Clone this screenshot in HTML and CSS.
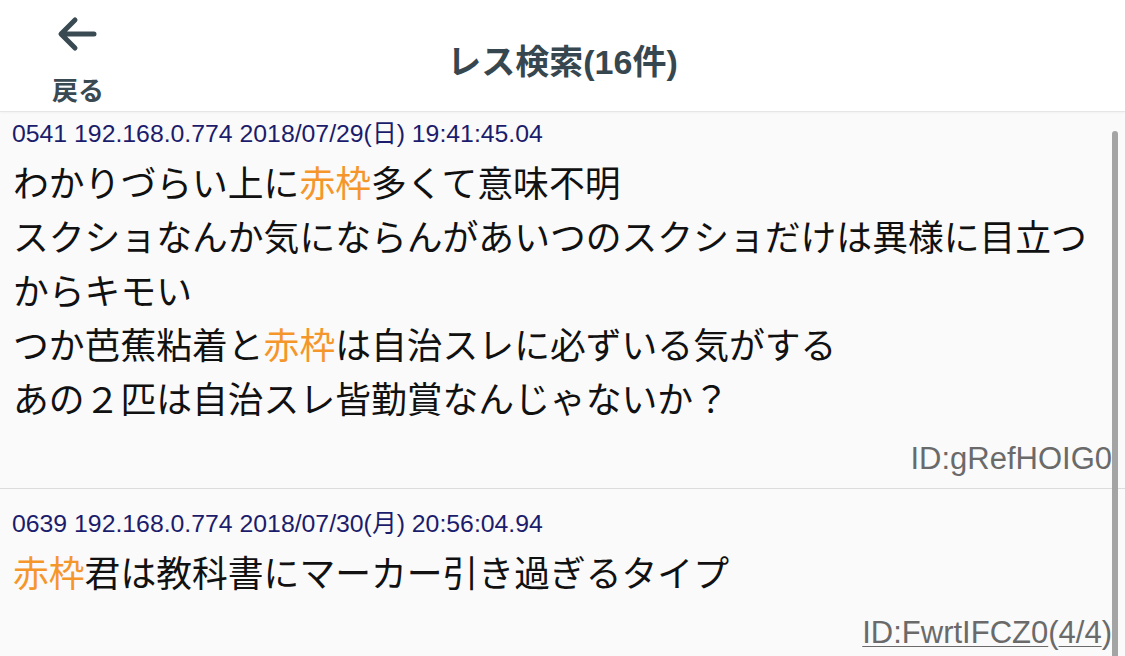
FILE: index.html
```html
<!DOCTYPE html>
<html lang="ja">
<head>
<meta charset="utf-8">
<link rel="stylesheet" href="styles.css">
</head>
<body>
<div class="app">
  <header class="header">
    <div class="back">
      <svg class="back-icon" width="44" height="36" viewBox="0 0 44 36">
        <path d="M6 18 H38 M19 4 L5 18 L19 32" fill="none" stroke="#3a4a52" stroke-width="5" stroke-linecap="round" stroke-linejoin="round"/>
      </svg>
      <span class="back-label">戻る</span>
    </div>
    <h1 class="title">レス検索(16件)</h1>
    <div class="spacer"></div>
  </header>
  <main class="list">
    <article class="post first">
      <div class="meta">0541 192.168.0.774 2018/07/29(日) 19:41:45.04</div>
      <div class="body">わかりづらい上に<span class="hl">赤枠</span>多くて意味不明<br>スクショなんか気にならんがあいつのスクショだけは異様に目立つからキモい<br>つか芭蕉粘着と<span class="hl">赤枠</span>は自治スレに必ずいる気がする<br>あの２匹は自治スレ皆勤賞なんじゃないか？</div>
      <div class="id">ID:gRefHOIG0</div>
    </article>
    <article class="post">
      <div class="meta">0639 192.168.0.774 2018/07/30(月) 20:56:04.94</div>
      <div class="body"><span class="hl">赤枠</span>君は教科書にマーカー引き過ぎるタイプ</div>
      <div class="id"><span class="link">ID:FwrtIFCZ0</span>(<span class="link">4/4</span>)</div>
    </article>
    <div class="scrollbar"></div>
  </main>
</div>
</body>
</html>
```
FILE: styles.css
```css
html, body {
  margin: 0;
  padding: 0;
  width: 1125px;
  height: 656px;
  overflow: hidden;
  background: #fafafa;
  font-family: "Liberation Sans", "Noto Sans CJK JP", sans-serif;
}
.app {
  display: flex;
  flex-direction: column;
  height: 656px;
}
.header {
  height: 111px;
  background: #ffffff;
  border-bottom: 1px solid #e6e6e6;
  box-shadow: 0 1px 2px rgba(0,0,0,0.04);
  display: flex;
  align-items: stretch;
  flex-shrink: 0;
}
.back {
  width: 156px;
  display: flex;
  flex-direction: column;
  align-items: center;
  padding-top: 16px;
  box-sizing: border-box;
}
.back-icon {
  display: block;
}
.back-label {
  margin-top: 20px;
  font-family: "Noto Sans CJK JP", sans-serif;
  font-weight: 700;
  font-size: 26px;
  line-height: 34px;
  color: #3a4a52;
}
.title {
  flex: 1;
  margin: 0;
  text-align: center;
  font-size: 34px;
  font-weight: 700;
  color: #37474f;
  line-height: 40px;
  padding-top: 42px;
}
.spacer {
  width: 156px;
}
.list {
  position: relative;
  flex: 1;
  overflow: hidden;
}
.post {
  padding: 20px 13px 9px 12px;
  border-bottom: 1px solid #dcdcdc;
}
.post.first {
  padding-top: 7px;
}
.meta {
  font-size: 24.8px;
  line-height: 30px;
  color: #1c1c6c;
}
.body {
  margin-top: 5px;
  padding-left: 1px;
  font-family: "Noto Sans CJK JP", sans-serif;
  font-size: 35.8px;
  line-height: 54px;
  color: #111111;
  padding-right: 10px;
}
.hl {
  color: #f5962a;
}
.id {
  margin-top: 15px;
  text-align: right;
  font-size: 31px;
  line-height: 40px;
  color: #6a6a6a;
}
.link {
  text-decoration: underline;
  text-decoration-thickness: 1px;
  text-underline-offset: 3px;
}
.scrollbar {
  position: absolute;
  left: 1112px;
  top: 19px;
  width: 6px;
  height: 600px;
  border-radius: 3px 3px 0 0;
  background: #a4a4a4;
}
```
